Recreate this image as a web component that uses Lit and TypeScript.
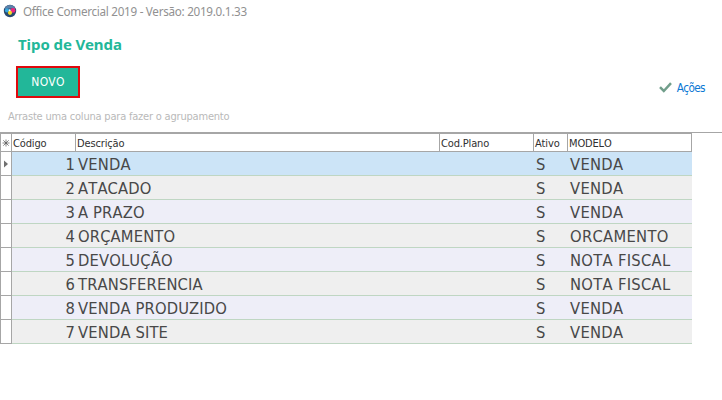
import { LitElement, html, css } from "lit";
import { customElement } from "lit/decorators.js";
import { classMap } from "lit/directives/class-map.js";

interface Sale { code: number; name: string; model: string; }

const SALES: Sale[] = [
  { code: 1, name: "VENDA", model: "VENDA" },
  { code: 2, name: "ATACADO", model: "VENDA" },
  { code: 3, name: "A PRAZO", model: "VENDA" },
  { code: 4, name: "ORÇAMENTO", model: "ORCAMENTO" },
  { code: 5, name: "DEVOLUÇÃO", model: "NOTA FISCAL" },
  { code: 6, name: "TRANSFERENCIA", model: "NOTA FISCAL" },
  { code: 8, name: "VENDA PRODUZIDO", model: "VENDA" },
  { code: 7, name: "VENDA SITE", model: "VENDA" },
];

@customElement("sales-grid")
class SalesGrid extends LitElement {
  static styles = css`
    :host { display: block; border-top: 1px solid #a6a6a6; font-family: "DejaVu Sans Condensed", "DejaVu Sans", sans-serif; }
    .row {
      display: grid;
      grid-template-columns: 12px 64px 364px 94px 34px 124px;
      width: 692px;
      height: 24px;
      box-sizing: border-box;
      font-size: 16.4px;
      font-kerning: none;
      letter-spacing: 0.15px;
      line-height: 25px;
      color: #484848;
      background: #efefef;
      white-space: pre;
    }
    .row > div { box-sizing: border-box; height: 24px; border-bottom: 1px solid #bfd6c3; padding-left: 2px; }
    .row.odd { background: #eeeef8; }
    .row.selected { background: #cce4f7; }
    .row > .mark {
      border-left: 1px solid #a6a6a6;
      border-right: 1px solid #a6a6a6;
      border-bottom-color: #a6a6a6;
      background: #fff;
      padding: 0;
      display: flex;
      align-items: center;
      justify-content: center;
    }
    .row > .code { text-align: right; padding-right: 1px; }
    .row > .model { letter-spacing: 0.3px; }
    .row.head {
      height: 19px;
      font-size: 11px;
      line-height: 19px;
      color: #303030;
      background: #fff;
      border-top: 1px solid #a6a6a6;
      letter-spacing: -0.15px;
    }
    .row.head > div { height: 18px; border-right: 1px solid #a6a6a6; border-bottom-color: #a6a6a6; padding-left: 1px; }
    .row.head > .mark { padding: 0; }
    svg { display: block; }
  `;
  render() {
    return html`
      <div class="row head">
        <div class="mark">
          <svg width="8" height="8" viewBox="0 0 8 8" fill="none" stroke="#505050" stroke-width=".7">
            <path d="M4 .5v7M.5 4h7M1.3 1.3l5.4 5.4M6.7 1.3L1.3 6.7" />
          </svg>
        </div>
        <div>Código</div><div>Descrição</div><div>Cod.Plano</div><div>Ativo</div><div>MODELO</div>
      </div>
      ${SALES.map((s, i) => html`
        <div class=${classMap({ row: true, odd: i % 2 === 0, selected: i === 0 })}>
          <div class="mark">
            ${i === 0 ? html`<svg width="4" height="8" viewBox="0 0 4 8"><path d="M0 0.5L4 4L0 7.5z" fill="#707070" /></svg>` : ""}
          </div>
          <div class="code">${s.code}</div>
          <div>${s.name}</div>
          <div></div>
          <div>S</div>
          <div class="model">${s.model}</div>
        </div>`)}
    `;
  }
}

@customElement("app-root")
class AppRoot extends LitElement {
  static styles = css`
    :host {
      display: block;
      width: 722px;
      height: 400px;
      overflow: hidden;
      background: #fff;
      font-family: "Noto Sans", "Open Sans", sans-serif;
      white-space: nowrap;
    }
    .title { display: flex; height: 24px; padding-left: 3px; font-size: 11.7px; line-height: 22px; color: #919191; letter-spacing: -0.29px; }
    .title svg { margin: 4px 6px 0 0; }
    h1 { margin: 0; height: 42px; padding: 9px 0 0 18px; box-sizing: border-box; font-size: 15px; line-height: 22px; font-weight: 700; color: #22b799; letter-spacing: -0.08px; }
    .tools { display: flex; justify-content: space-between; height: 32px; padding: 0 17px 0 16px; }
    button {
      width: 64px;
      height: 32px;
      padding: 0;
      border: 2px solid #e0090d;
      background: #22b799;
      color: #fff;
      font: 12px/28px "DejaVu Sans Condensed", "DejaVu Sans", sans-serif;
      letter-spacing: 0.4px;
    }
    .actions { display: flex; align-items: center; gap: 5px; padding-top: 11px; font: 11.7px "DejaVu Sans Condensed", "DejaVu Sans", sans-serif; color: #0b78d4; letter-spacing: -0.6px; }
    .group { height: 34px; padding-left: 8px; box-sizing: border-box; font: 11px/37px "DejaVu Sans Condensed", "DejaVu Sans", sans-serif; color: #b9b9b9; letter-spacing: -0.2px; }
  `;
  render() {
    return html`
      <div class="title">
        <svg width="14" height="14" viewBox="0 0 14 14">
          <circle cx="7" cy="7" r="6.2" fill="#29496f" />
          <path d="M1.5 5Q3 1 7 1T12.5 5L9 4.5H5z" fill="#5d82aa" />
          <circle cx="4" cy="6.4" r="2.1" fill="#35a9e0" />
          <circle cx="10" cy="6.4" r="2.4" fill="#ed247c" />
          <circle cx="7" cy="8.8" r="2.1" fill="#f5d929" />
          <circle cx="6.7" cy="6.2" r="1" fill="#fff" />
        </svg>
        <span>Office Comercial 2019 - Versão: 2019.0.1.33</span>
      </div>
      <h1>Tipo de Venda</h1>
      <div class="tools">
        <button>NOVO</button>
        <div class="actions">
          <svg width="13" height="11" viewBox="0 0 13 11" fill="none" stroke="#719e8b" stroke-width="2.5"><path d="M1 5.2L4.8 9L12 1.2" /></svg>
          <span>Ações</span>
        </div>
      </div>
      <div class="group">Arraste uma coluna para fazer o agrupamento</div>
      <sales-grid></sales-grid>
    `;
  }
}
